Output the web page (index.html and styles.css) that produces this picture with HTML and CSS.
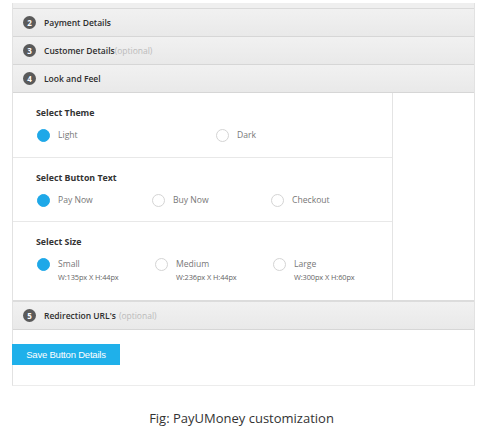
FILE: index.html
```html
<!DOCTYPE html>
<html lang="en">
<head>
    <meta charset="UTF-8">
    <title>PayUMoney Button Settings</title>
    <link rel="stylesheet" href="styles.css">
</head>
<body>
    <div class="page">
        <div class="panel">
            <div class="step-top"></div>

            <div class="step-head">
                <span class="step-num">2</span>
                <span class="step-title">Payment Details</span>
            </div>
            <div class="step-head">
                <span class="step-num">3</span>
                <span class="step-title">Customer Details</span><span class="optional">(optional)</span>
            </div>
            <div class="step-head">
                <span class="step-num">4</span>
                <span class="step-title">Look and Feel</span>
            </div>

            <div class="look-body">
                <div class="look-options">
                    <div class="option-group">
                        <h4>Select Theme</h4>
                        <div class="choices choices-theme">
                            <label class="choice"><span class="radio checked"></span>Light</label>
                            <label class="choice"><span class="radio"></span>Dark</label>
                        </div>
                    </div>

                    <div class="option-group">
                        <h4>Select Button Text</h4>
                        <div class="choices choices-text">
                            <label class="choice"><span class="radio checked"></span>Pay Now</label>
                            <label class="choice"><span class="radio"></span>Buy Now</label>
                            <label class="choice"><span class="radio"></span>Checkout</label>
                        </div>
                    </div>

                    <div class="option-group size-group">
                        <h4>Select Size</h4>
                        <div class="choices choices-size">
                            <label class="choice"><span class="radio checked"></span><span>Small<small>W:135px X H:44px</small></span></label>
                            <label class="choice"><span class="radio"></span><span>Medium<small>W:236px X H:44px</small></span></label>
                            <label class="choice"><span class="radio"></span><span>Large<small>W:300px X H:60px</small></span></label>
                        </div>
                    </div>
                </div>
                <div class="preview"></div>
            </div>

            <div class="step-head">
                <span class="step-num">5</span>
                <span class="step-title">Redirection URL's</span><span class="optional spaced">(optional)</span>
            </div>

            <div class="actions">
                <button type="button" class="save-btn">Save Button Details</button>
            </div>
        </div>

        <p class="caption">Fig: PayUMoney customization</p>
    </div>
</body>
</html>
```

FILE: styles.css
```css
body {
    margin: 0;
    background: #fff;
    font-family: "Open Sans", Arial, sans-serif;
}

.page {
    padding: 3px 8px 0 12px;
}

.panel {
    width: 461px;
    border-left: 1px solid #e2e2e2;
    border-right: 1px solid #e2e2e2;
    border-bottom: 1px solid #ececec;
}

.step-top {
    height: 5px;
    background: #efefef;
    border-bottom: 1px solid #dadada;
}

.step-head {
    height: 27px;
    display: flex;
    align-items: center;
    padding-left: 10px;
    background: linear-gradient(#f1f1f1, #e9e9e9);
    border-bottom: 1px solid #d6d6d6;
    font-size: 8.5px;
}

.step-num {
    width: 13px;
    height: 13px;
    border-radius: 50%;
    background: #5a5a5a;
    color: #fff;
    font-weight: 700;
    font-size: 8px;
    line-height: 13px;
    text-align: center;
    margin-right: 8px;
}

.step-title {
    font-weight: 600;
    color: #2e2e2e;
}

.optional {
    color: #bbb;
}

.optional.spaced {
    margin-left: 3px;
}

.look-body {
    display: flex;
    background: #fff;
    border-bottom: 2px solid #dcdcdc;
}

.look-options {
    width: 379px;
    border-right: 1px solid #e4e4e4;
}

.preview {
    flex: 1;
}

.option-group {
    height: 64px;
    padding: 15px 0 0 23px;
    box-sizing: border-box;
    border-bottom: 1px solid #e8e8e8;
}

.option-group:first-child {
    height: 65px;
}

.option-group.size-group {
    height: 78px;
    border-bottom: none;
}

.option-group h4 {
    margin: 0 0 11px;
    font-size: 8.8px;
    font-weight: 700;
    color: #333;
    line-height: 10px;
}

.choices {
    display: grid;
    grid-template-columns: 179px 179px;
}

.choices-text {
    grid-template-columns: 115px 119px 110px;
}

.choices-size {
    grid-template-columns: 118px 118px 110px;
}

.choice {
    display: flex;
    align-items: flex-start;
    font-size: 8.6px;
    color: #777;
    line-height: 12px;
}

.choice small {
    display: block;
    font-size: 7.4px;
    color: #666;
    line-height: 14px;
    letter-spacing: -0.1px;
}

.radio {
    width: 11px;
    height: 11px;
    border-radius: 50%;
    border: 1px solid #d4d4d4;
    margin: 0 8px 0 1px;
    flex-shrink: 0;
}

.radio.checked {
    border-color: #1ea8e8;
    background: #1ea8e8;
}

.actions {
    height: 55px;
    padding-top: 14px;
    box-sizing: border-box;
    margin-left: -1px;
}

.save-btn {
    display: block;
    width: 108px;
    height: 21px;
    border: none;
    background: #1fb0ea;
    color: #fff;
    font-family: "Liberation Sans", Arial, sans-serif;
    font-size: 9.5px;
    letter-spacing: -0.2px;
    padding: 0;
}

.caption {
    margin: 23px 0 0;
    padding-right: 4px;
    text-align: center;
    font-size: 13px;
    color: #333;
}
```
